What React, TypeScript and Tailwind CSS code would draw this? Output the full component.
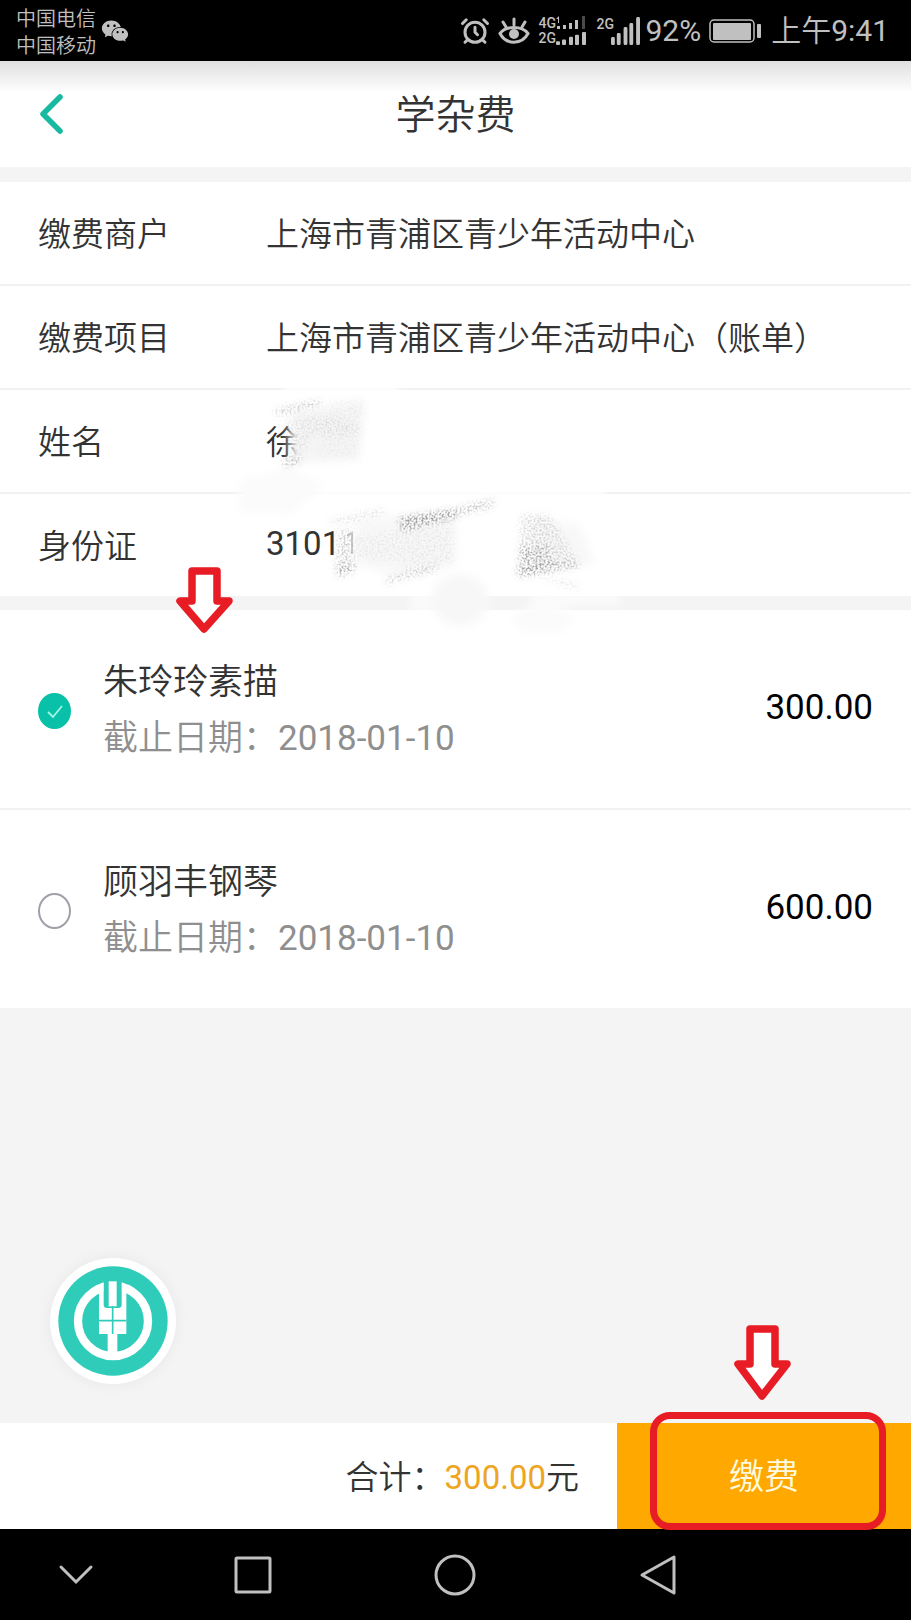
import { useState } from "react";
import { AlarmClock } from "lucide-react";
import { AiFillWechat } from "react-icons/ai";

const details = [
  { label: "缴费商户", value: "上海市青浦区青少年活动中心" },
  { label: "缴费项目", value: "上海市青浦区青少年活动中心（账单）" },
  { label: "姓名", value: "徐" },
  { label: "身份证", value: "3101", numeric: true },
];

const bills = [
  { id: "sketch", name: "朱玲玲素描", due: "2018-01-10", amount: 300 },
  { id: "piano", name: "顾羽丰钢琴", due: "2018-01-10", amount: 600 },
];

function SignalBars({ className }: { className: string }) {
  return (
    <svg className={className} viewBox="0 0 30 14" preserveAspectRatio="none" fill="currentColor">
      <rect x="0" y="10" width="4" height="4" rx="1" />
      <rect x="6" y="8" width="4" height="6" rx="1" />
      <rect x="13" y="5" width="4" height="9" rx="1" />
      <rect x="19" y="3" width="4" height="11" rx="1" />
      <rect x="26" y="0" width="4" height="14" rx="1" />
    </svg>
  );
}

function StatusBar() {
  return (
    <div className="flex h-[61px] items-center bg-black pl-4 pr-[22px] text-[#c0c0c0]">
      <div className="pt-1 text-[20px] leading-[27px]">
        <p>中国电信</p>
        <p>中国移动</p>
      </div>
      <AiFillWechat className="ml-1 size-[30px]" />
      <div className="ml-auto flex items-center">
        <AlarmClock className="size-[30px]" strokeWidth={2.4} />
        <svg className="ml-2 h-[30px] w-8" viewBox="0 0 32 30" fill="none" stroke="currentColor" strokeWidth="3" strokeLinecap="round">
          <path d="M2 17.500C8 9.500 24 9.500 30 17.500C24 29 8 29 2 17.500Z" />
          <path d="M16 9V3M8 11L5 6M24 11L27 6" />
          <circle cx="16" cy="18" r="5" fill="currentColor" stroke="none" />
        </svg>
        <div className="ml-2 flex flex-col text-[14px] font-medium leading-[15px]">
          <div className="flex items-center">
            <span className="w-[18px]">4G</span>
            <svg className="h-[14px] w-[30px]" viewBox="0 0 30 14" fill="currentColor">
              <path d="M0 3L3 0V7H2V3ZM1 10h3v3H1ZM7 9h3v4H7ZM13 7h3v6h-3ZM19 4h3v9h-3Z" />
              <path d="M26 0h3v13h-3Z" fill="#4a4a4a" />
            </svg>
          </div>
          <div className="flex items-center">
            <span className="w-[18px]">2G</span>
            <SignalBars className="h-[13px] w-[30px]" />
          </div>
        </div>
        <div className="ml-[10px] flex text-[14px] font-medium leading-[15px]">
          <span className="w-[15px]">2G</span>
          <SignalBars className="h-7 w-[29px]" />
        </div>
        <span className="ml-[5px] text-[30px] font-normal leading-9">92%</span>
        <svg className="ml-2 h-6 w-[52px]" viewBox="0 0 52 24" fill="none">
          <rect x="1" y="1" width="44" height="22" rx="4" stroke="currentColor" strokeWidth="1.500" />
          <rect x="4" y="4" width="38" height="17" rx="1" fill="currentColor" />
          <rect x="48" y="5" width="4" height="14" rx="1" fill="currentColor" />
        </svg>
        <span className="ml-[10px] text-[30px] leading-9">
          上午<span className="font-normal">9:41</span>
        </span>
      </div>
    </div>
  );
}

// Pencil-like scribble that hides the rest of the name and the ID number
function Redaction() {
  return (
    <svg className="pointer-events-none absolute -top-[230px] left-[230px] h-[260px] w-[400px]" viewBox="0 0 400 260" aria-hidden="true">
      <defs>
        <filter id="soft" x="-30%" y="-50%" width="160%" height="200%">
          <feGaussianBlur stdDeviation="5" />
        </filter>
        <filter id="grain" x="-10%" y="-10%" width="120%" height="120%">
          <feTurbulence type="fractalNoise" baseFrequency="0.5" numOctaves="4" seed="4" result="noise" />
          <feColorMatrix in="noise" type="matrix" values="0 0 0 0 0 0 0 0 0 0 0 0 0 0 0 0 0 0 4 -1.700" result="dots" />
          <feGaussianBlur in="SourceGraphic" stdDeviation="3" result="shape" />
          <feComposite in="shape" in2="dots" operator="in" />
        </filter>
      </defs>
      <g filter="url(#soft)">
        <path d="M55 2H168V14H55ZM48 106H374V118H48Z" fill="#fff" />
        <path d="M58 45L92 30V90L60 92Z" fill="#fff" opacity="0.600" />
        <path d="M180 212H260V232H180ZM300 212H390V226H300Z" fill="#fff" opacity="0.600" />
        <path d="M62 32L134 22L128 80L62 82Z" fill="#f5f5f5" />
        <path d="M10 100L60 88L95 105L60 135L8 132Z" fill="#fbfbfb" />
        <path d="M125 140L225 130V185L165 195L125 185ZM300 138L350 145L365 185L300 190Z" fill="#f8f8f8" />
        <ellipse cx="230" cy="220" rx="28" ry="26" fill="#f7f7f7" />
        <ellipse cx="312" cy="240" rx="30" ry="14" fill="#fbfbfb" />
      </g>
      <path d="M117 156L122 153V174" fill="none" stroke="#999" strokeWidth="2" opacity="0.500" />
      <g filter="url(#grain)" fill="#888">
        <path d="M45 30L90 20L90 25L46 35ZM53 79L72 75L70 82L54 88Z" opacity="0.600" />
        <path d="M52 42L88 34L132 48L128 54L80 56L76 70L56 76Z" opacity="0.160" />
        <path d="M100 20L136 18L128 76L88 78Z" opacity="0.080" />
        <path d="M98 140L152 128L156 134L104 146Z" opacity="0.250" />
        <path d="M108 150H122V190L108 197L106 176Z" opacity="0.400" />
        <path d="M106 186L126 182L124 191L108 197Z" opacity="0.600" />
        <path d="M168 138L228 129L228 137L180 149L172 151Z" opacity="0.900" />
        <path d="M120 155L168 150L225 145V182L160 200L156 198L180 184L125 178Z" opacity="0.120" />
        <path d="M154 200L205 184L208 190L156 204Z" opacity="0.450" />
        <path d="M228 128L265 118L262 127L230 135Z" opacity="0.550" />
        <path d="M290 135L318 133L335 160L350 186L288 195Z" opacity="0.280" />
        <path d="M290 166L316 164L325 184L288 195Z" opacity="0.500" />
        <path d="M287 188L348 182L346 187L288 197Z" opacity="0.700" />
        <path d="M300 194L350 206L346 209Z" opacity="0.400" />
      </g>
    </svg>
  );
}

function BankLogo() {
  return (
    <svg className="size-[126px]" viewBox="60 55 378 378">
      <circle cx="249" cy="244" r="164" fill="#2fcdb9" />
      <circle cx="249" cy="244" r="105" fill="none" stroke="#fff" strokeWidth="25" />
      <path d="M220 112H276V206H220Z" fill="#2fcdb9" />
      <path d="M207 134L221 128V196Q221 205 231 205H265Q275 205 275 196V128L289 134V283H262V350H233V283H207Z" fill="#fff" />
      <path d="M236 125H260V200H236Z" fill="#fff" />
      <path d="M248 200V283M207 243H289" stroke="#2fcdb9" strokeWidth="5" />
    </svg>
  );
}

export default function App() {
  const [selected, setSelected] = useState<string[]>(["sketch"]);

  const toggle = (id: string) => {
    setSelected(selected.includes(id) ? selected.filter((s) => s !== id) : [...selected, id]);
  };

  const total = bills.filter((b) => selected.includes(b.id)).reduce((sum, b) => sum + b.amount, 0);

  return (
    <div className="flex min-h-screen flex-col bg-[#f4f4f4] font-[Roboto,'Noto_Sans_CJK_SC',sans-serif] font-[350] text-[#333]">
      <StatusBar />

      <header className="grid h-[106px] grid-cols-[1fr_auto_1fr] items-center bg-linear-to-b from-[#e0e0e0] via-white via-30% to-white px-[38px]">
        <button type="button" aria-label="返回" className="justify-self-start">
          <svg className="h-[42px] w-7" viewBox="0 0 28 42" fill="none" stroke="#17b9a0" strokeWidth="5.500" strokeLinecap="round" strokeLinejoin="round">
            <path d="M22 4L5 21L22 38" />
          </svg>
        </button>
        <h1 className="pt-1 text-[40px] leading-12">学杂费</h1>
      </header>

      <section className="mt-[15px] bg-white">
        <dl>
          {details.map((d) => (
            <div key={d.label} className="flex h-[104px] items-center border-b-2 border-[#f2f2f2] px-[38px] pt-1 text-[33px] leading-10 last:h-[102px] last:border-b-0">
              <dt className="w-[228px] shrink-0">{d.label}</dt>
              <dd className={d.numeric ? "pb-1.5 font-normal" : ""}>{d.value}</dd>
            </div>
          ))}
        </dl>
      </section>

      <section className="relative mt-[14px] bg-white">
        {bills.map((b) => (
          <label key={b.id} className="flex h-[200px] items-center border-b-2 border-[#f2f2f2] px-[38px] pt-1 last-of-type:h-[198px] last-of-type:border-b-0">
            <span className="grid shrink-0 place-items-center">
              <input
                type="checkbox"
                checked={selected.includes(b.id)}
                onChange={() => toggle(b.id)}
                className="peer col-start-1 row-start-1 h-9 w-[33px] appearance-none rounded-[50%] border-2 border-[#a0a0a8] checked:border-[#08c1a8] checked:bg-[#08c1a8]"
              />
              <svg className="invisible col-start-1 row-start-1 size-4 peer-checked:visible" viewBox="0 0 16 16" fill="none" stroke="#a5f5e6" strokeWidth="1.800">
                <path d="M1 9L6 14L15 3" />
              </svg>
            </span>
            <span className="ml-8 flex flex-col gap-2 text-[35px] leading-12">
              <span>{b.name}</span>
              <span className="text-[#8f8f8f]">
                截止日期：<span className="font-normal">{b.due}</span>
              </span>
            </span>
            <span className="ml-auto pb-1.5 text-[35px] font-normal leading-12 text-black">{b.amount.toFixed(2)}</span>
          </label>
        ))}
        <Redaction />
        <svg className="absolute -top-[43px] left-[176px] h-[67px] w-[57px]" viewBox="0 0 57 67" fill="#fff" stroke="#e81c24" strokeWidth="7.500" strokeLinejoin="round">
          <path d="M16 4H41V34H53L28 62L4 34H16Z" />
        </svg>
      </section>

      <main className="flex flex-1 items-end pb-[39px] pl-[50px]">
        <button type="button" aria-label="农业银行" className="rounded-full bg-white shadow-[0_0_8px_4px_#ededed]">
          <BankLogo />
        </button>
      </main>

      <footer className="flex h-[106px] items-stretch bg-white">
        <p className="flex flex-1 items-center justify-end pr-[38px] pt-1 text-[33px] leading-10">
          合计：<span className="font-normal text-[#eda522]">{total.toFixed(2)}</span>元
        </p>
        <div className="relative flex w-[294px]">
          <button type="button" className="flex-1 bg-[#ffa800] pt-1 text-[35px] leading-12 text-[#fffbe0]">
            缴费
          </button>
          <svg className="absolute -top-[98px] left-[117px] h-[76px] w-[57px]" viewBox="0 0 57 76" fill="#fff" stroke="#e81c24" strokeWidth="7.500" strokeLinejoin="round">
            <path d="M16 4H41V39H53L28 71L4 39H16Z" />
          </svg>
          <div className="pointer-events-none absolute -bottom-px -top-[11px] left-[33px] right-[25px] rounded-[20px] border-7 border-[#e81c24]" />
        </div>
      </footer>

      <nav className="grid h-[91px] grid-cols-[3fr_4fr_4fr_4fr_3fr] items-center justify-items-center bg-black text-[#c0c0c0]">
        <button type="button" aria-label="隐藏导航栏">
          <svg className="h-6 w-9" viewBox="0 0 36 24" fill="none" stroke="currentColor" strokeWidth="3" strokeLinecap="round">
            <path d="M3 4L18 19L33 4" />
          </svg>
        </button>
        <button type="button" aria-label="最近任务">
          <svg className="size-[42px]" viewBox="0 0 42 42" fill="none" stroke="currentColor" strokeWidth="3">
            <rect x="4" y="4" width="34" height="34" rx="1" />
          </svg>
        </button>
        <button type="button" aria-label="主页">
          <svg className="size-[42px]" viewBox="0 0 42 42" fill="none" stroke="currentColor" strokeWidth="3">
            <circle cx="21" cy="21" r="19" />
          </svg>
        </button>
        <button type="button" aria-label="返回上一页">
          <svg className="size-[42px]" viewBox="0 0 42 42" fill="none" stroke="currentColor" strokeWidth="3" strokeLinejoin="round">
            <path d="M37 3V39L5 21Z" />
          </svg>
        </button>
      </nav>
    </div>
  );
}
